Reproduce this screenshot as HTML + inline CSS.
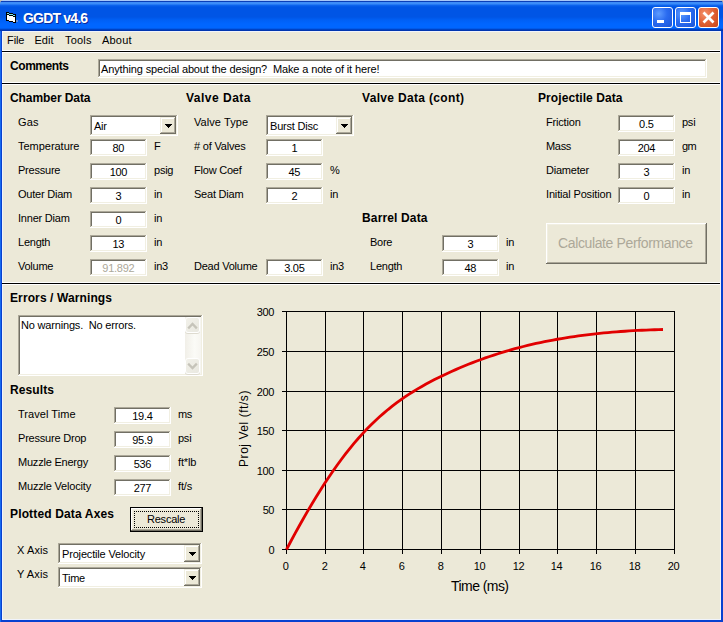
<!DOCTYPE html>
<html><head><meta charset="utf-8"><title>GGDT v4.6</title>
<style>
html,body{margin:0;padding:0;width:723px;height:622px;overflow:hidden;background:#C9C3B4}
body>div,body>svg{position:absolute}
div{position:absolute;box-sizing:content-box;font-family:"Liberation Sans",sans-serif;white-space:pre}
</style></head><body>
<div style="left:0;top:0;width:723px;height:31px;border-radius:4px 4px 0 0;background:linear-gradient(to bottom,#A8C8F8 0px,#A8C8F8 1px,#0A3EB8 1px,#0A3EB8 2px,#3D8DF8 2px,#3D8DF8 4px,#1068F0 5px,#0055E5 7px,#0055E5 17px,#0060F5 20px,#0066FF 24px,#0066FF 28px,#0050D8 29px,#0035B0 30px,#0035B0 31px)"></div>
<div style="left:0px;top:31px;width:723px;height:591px;background:#0841D0;"></div>
<div style="left:0px;top:31px;width:1px;height:591px;background:#166AEE;"></div>
<div style="left:2px;top:31px;width:719px;height:589px;background:#F0F4FC;"></div>
<div style="left:3px;top:32px;width:717px;height:587px;background:#ECE9D8;"></div>
<svg style="position:absolute;left:0;top:0" width="20" height="26" shape-rendering="crispEdges"><rect x="7" y="12" width="2" height="1" fill="#000"/><rect x="7" y="13" width="2" height="1" fill="#7FE3E8"/><rect x="7" y="14" width="2" height="1" fill="#000"/><rect x="7" y="15" width="2" height="5" fill="#FFF"/><rect x="7" y="20" width="2" height="1" fill="#000"/><rect x="9" y="13" width="4" height="1" fill="#000"/><rect x="9" y="14" width="4" height="1" fill="#7FE3E8"/><rect x="9" y="15" width="4" height="1" fill="#000"/><rect x="9" y="16" width="4" height="5" fill="#FFF"/><rect x="9" y="21" width="4" height="1" fill="#000"/><rect x="13" y="14" width="2" height="1" fill="#000"/><rect x="13" y="15" width="2" height="1" fill="#7FE3E8"/><rect x="13" y="16" width="2" height="1" fill="#000"/><rect x="13" y="17" width="2" height="5" fill="#FFF"/><rect x="13" y="22" width="2" height="1" fill="#000"/><rect x="6" y="12" width="1" height="9" fill="#000"/><rect x="15" y="14" width="1" height="9" fill="#000"/><rect x="16" y="20" width="2" height="2" fill="#8CA0C8" opacity="0.7"/></svg>
<div style="left:652px;top:7px;width:19px;height:19px;border:1px solid #fff;border-radius:3px;background:radial-gradient(circle at 30% 30%,#5E9CFF 0%,#2A6BF0 45%,#1A55D8 100%)"></div>
<div style="left:675px;top:7px;width:19px;height:19px;border:1px solid #fff;border-radius:3px;background:radial-gradient(circle at 30% 30%,#5E9CFF 0%,#2A6BF0 45%,#1A55D8 100%)"></div>
<div style="left:698px;top:7px;width:19px;height:19px;border:1px solid #fff;border-radius:3px;background:radial-gradient(circle at 30% 30%,#F5926C 0%,#E26338 45%,#C84517 100%)"></div>
<div style="left:657px;top:20px;width:7px;height:3px;background:#fff;"></div>
<div style="left:680px;top:12px;width:9px;height:7px;border:1px solid #fff;border-top-width:3px"></div>
<svg style="position:absolute;left:698px;top:7px" width="21" height="21"><path d="M5.5 5.5L15.5 15.5M15.5 5.5L5.5 15.5" stroke="#fff" stroke-width="2.7"/></svg>
<div style="left:2px;top:50px;width:718px;height:1px;background:#FFFFFF;"></div>
<div style="left:2px;top:51px;width:718px;height:1px;background:#000;"></div>
<div style="left:2px;top:52px;width:718px;height:1px;background:#FFFFFF;"></div>
<div style="left:98px;top:59px;width:609px;height:19px;background:#FFFFFF;"></div>
<div style="left:98px;top:59px;width:608px;height:18px;background:#ACA899;"></div>
<div style="left:99px;top:60px;width:607px;height:17px;background:#F1EFE2;"></div>
<div style="left:99px;top:60px;width:606px;height:16px;background:#716F64;"></div>
<div style="left:100px;top:61px;width:605px;height:15px;background:#fff;"></div>
<div style="left:2px;top:82px;width:718px;height:1px;background:#FFFFFF;"></div>
<div style="left:2px;top:83px;width:718px;height:1px;background:#000;"></div>
<div style="left:2px;top:84px;width:718px;height:1px;background:#FFFFFF;"></div>
<div style="left:90px;top:115px;width:88px;height:21px;background:#FFFFFF;"></div>
<div style="left:90px;top:115px;width:87px;height:20px;background:#ACA899;"></div>
<div style="left:91px;top:116px;width:86px;height:19px;background:#F1EFE2;"></div>
<div style="left:91px;top:116px;width:85px;height:18px;background:#716F64;"></div>
<div style="left:92px;top:117px;width:84px;height:17px;background:#fff;"></div>
<div style="left:160px;top:117px;width:16px;height:17px;background:#716F64;"></div>
<div style="left:160px;top:117px;width:15px;height:16px;background:#F1EFE2;"></div>
<div style="left:161px;top:118px;width:14px;height:15px;background:#ACA899;"></div>
<div style="left:161px;top:118px;width:13px;height:14px;background:#FFFFFF;"></div>
<div style="left:162px;top:119px;width:12px;height:13px;background:#ECE9D8;"></div>
<svg style="position:absolute;left:165px;top:124px" width="7" height="4" shape-rendering="crispEdges"><rect x="0" y="0" width="7" height="1"/><rect x="1" y="1" width="5" height="1"/><rect x="2" y="2" width="3" height="1"/><rect x="3" y="3" width="1" height="1"/></svg>
<div style="left:90px;top:139px;width:57px;height:17px;background:#FFFFFF;"></div>
<div style="left:90px;top:139px;width:56px;height:16px;background:#ACA899;"></div>
<div style="left:91px;top:140px;width:55px;height:15px;background:#F1EFE2;"></div>
<div style="left:91px;top:140px;width:54px;height:14px;background:#716F64;"></div>
<div style="left:92px;top:141px;width:53px;height:13px;background:#fff;"></div>
<div style="left:90px;top:163px;width:57px;height:17px;background:#FFFFFF;"></div>
<div style="left:90px;top:163px;width:56px;height:16px;background:#ACA899;"></div>
<div style="left:91px;top:164px;width:55px;height:15px;background:#F1EFE2;"></div>
<div style="left:91px;top:164px;width:54px;height:14px;background:#716F64;"></div>
<div style="left:92px;top:165px;width:53px;height:13px;background:#fff;"></div>
<div style="left:90px;top:187px;width:57px;height:17px;background:#FFFFFF;"></div>
<div style="left:90px;top:187px;width:56px;height:16px;background:#ACA899;"></div>
<div style="left:91px;top:188px;width:55px;height:15px;background:#F1EFE2;"></div>
<div style="left:91px;top:188px;width:54px;height:14px;background:#716F64;"></div>
<div style="left:92px;top:189px;width:53px;height:13px;background:#fff;"></div>
<div style="left:90px;top:211px;width:57px;height:17px;background:#FFFFFF;"></div>
<div style="left:90px;top:211px;width:56px;height:16px;background:#ACA899;"></div>
<div style="left:91px;top:212px;width:55px;height:15px;background:#F1EFE2;"></div>
<div style="left:91px;top:212px;width:54px;height:14px;background:#716F64;"></div>
<div style="left:92px;top:213px;width:53px;height:13px;background:#fff;"></div>
<div style="left:90px;top:235px;width:57px;height:17px;background:#FFFFFF;"></div>
<div style="left:90px;top:235px;width:56px;height:16px;background:#ACA899;"></div>
<div style="left:91px;top:236px;width:55px;height:15px;background:#F1EFE2;"></div>
<div style="left:91px;top:236px;width:54px;height:14px;background:#716F64;"></div>
<div style="left:92px;top:237px;width:53px;height:13px;background:#fff;"></div>
<div style="left:90px;top:259px;width:57px;height:17px;background:#FFFFFF;"></div>
<div style="left:90px;top:259px;width:56px;height:16px;background:#ACA899;"></div>
<div style="left:91px;top:260px;width:55px;height:15px;background:#F1EFE2;"></div>
<div style="left:91px;top:260px;width:54px;height:14px;background:#716F64;"></div>
<div style="left:92px;top:261px;width:53px;height:13px;background:#fff;"></div>
<div style="left:266px;top:115px;width:88px;height:21px;background:#FFFFFF;"></div>
<div style="left:266px;top:115px;width:87px;height:20px;background:#ACA899;"></div>
<div style="left:267px;top:116px;width:86px;height:19px;background:#F1EFE2;"></div>
<div style="left:267px;top:116px;width:85px;height:18px;background:#716F64;"></div>
<div style="left:268px;top:117px;width:84px;height:17px;background:#fff;"></div>
<div style="left:336px;top:117px;width:16px;height:17px;background:#716F64;"></div>
<div style="left:336px;top:117px;width:15px;height:16px;background:#F1EFE2;"></div>
<div style="left:337px;top:118px;width:14px;height:15px;background:#ACA899;"></div>
<div style="left:337px;top:118px;width:13px;height:14px;background:#FFFFFF;"></div>
<div style="left:338px;top:119px;width:12px;height:13px;background:#ECE9D8;"></div>
<svg style="position:absolute;left:341px;top:124px" width="7" height="4" shape-rendering="crispEdges"><rect x="0" y="0" width="7" height="1"/><rect x="1" y="1" width="5" height="1"/><rect x="2" y="2" width="3" height="1"/><rect x="3" y="3" width="1" height="1"/></svg>
<div style="left:266px;top:139px;width:57px;height:17px;background:#FFFFFF;"></div>
<div style="left:266px;top:139px;width:56px;height:16px;background:#ACA899;"></div>
<div style="left:267px;top:140px;width:55px;height:15px;background:#F1EFE2;"></div>
<div style="left:267px;top:140px;width:54px;height:14px;background:#716F64;"></div>
<div style="left:268px;top:141px;width:53px;height:13px;background:#fff;"></div>
<div style="left:266px;top:163px;width:57px;height:17px;background:#FFFFFF;"></div>
<div style="left:266px;top:163px;width:56px;height:16px;background:#ACA899;"></div>
<div style="left:267px;top:164px;width:55px;height:15px;background:#F1EFE2;"></div>
<div style="left:267px;top:164px;width:54px;height:14px;background:#716F64;"></div>
<div style="left:268px;top:165px;width:53px;height:13px;background:#fff;"></div>
<div style="left:266px;top:187px;width:57px;height:17px;background:#FFFFFF;"></div>
<div style="left:266px;top:187px;width:56px;height:16px;background:#ACA899;"></div>
<div style="left:267px;top:188px;width:55px;height:15px;background:#F1EFE2;"></div>
<div style="left:267px;top:188px;width:54px;height:14px;background:#716F64;"></div>
<div style="left:268px;top:189px;width:53px;height:13px;background:#fff;"></div>
<div style="left:266px;top:259px;width:57px;height:17px;background:#FFFFFF;"></div>
<div style="left:266px;top:259px;width:56px;height:16px;background:#ACA899;"></div>
<div style="left:267px;top:260px;width:55px;height:15px;background:#F1EFE2;"></div>
<div style="left:267px;top:260px;width:54px;height:14px;background:#716F64;"></div>
<div style="left:268px;top:261px;width:53px;height:13px;background:#fff;"></div>
<div style="left:442px;top:235px;width:57px;height:17px;background:#FFFFFF;"></div>
<div style="left:442px;top:235px;width:56px;height:16px;background:#ACA899;"></div>
<div style="left:443px;top:236px;width:55px;height:15px;background:#F1EFE2;"></div>
<div style="left:443px;top:236px;width:54px;height:14px;background:#716F64;"></div>
<div style="left:444px;top:237px;width:53px;height:13px;background:#fff;"></div>
<div style="left:442px;top:259px;width:57px;height:17px;background:#FFFFFF;"></div>
<div style="left:442px;top:259px;width:56px;height:16px;background:#ACA899;"></div>
<div style="left:443px;top:260px;width:55px;height:15px;background:#F1EFE2;"></div>
<div style="left:443px;top:260px;width:54px;height:14px;background:#716F64;"></div>
<div style="left:444px;top:261px;width:53px;height:13px;background:#fff;"></div>
<div style="left:618px;top:115px;width:57px;height:17px;background:#FFFFFF;"></div>
<div style="left:618px;top:115px;width:56px;height:16px;background:#ACA899;"></div>
<div style="left:619px;top:116px;width:55px;height:15px;background:#F1EFE2;"></div>
<div style="left:619px;top:116px;width:54px;height:14px;background:#716F64;"></div>
<div style="left:620px;top:117px;width:53px;height:13px;background:#fff;"></div>
<div style="left:618px;top:139px;width:57px;height:17px;background:#FFFFFF;"></div>
<div style="left:618px;top:139px;width:56px;height:16px;background:#ACA899;"></div>
<div style="left:619px;top:140px;width:55px;height:15px;background:#F1EFE2;"></div>
<div style="left:619px;top:140px;width:54px;height:14px;background:#716F64;"></div>
<div style="left:620px;top:141px;width:53px;height:13px;background:#fff;"></div>
<div style="left:618px;top:163px;width:57px;height:17px;background:#FFFFFF;"></div>
<div style="left:618px;top:163px;width:56px;height:16px;background:#ACA899;"></div>
<div style="left:619px;top:164px;width:55px;height:15px;background:#F1EFE2;"></div>
<div style="left:619px;top:164px;width:54px;height:14px;background:#716F64;"></div>
<div style="left:620px;top:165px;width:53px;height:13px;background:#fff;"></div>
<div style="left:618px;top:187px;width:57px;height:17px;background:#FFFFFF;"></div>
<div style="left:618px;top:187px;width:56px;height:16px;background:#ACA899;"></div>
<div style="left:619px;top:188px;width:55px;height:15px;background:#F1EFE2;"></div>
<div style="left:619px;top:188px;width:54px;height:14px;background:#716F64;"></div>
<div style="left:620px;top:189px;width:53px;height:13px;background:#fff;"></div>
<div style="left:546px;top:223px;width:161px;height:41px;background:#716F64"></div>
<div style="left:546px;top:223px;width:160px;height:40px;background:#FFFFFF"></div>
<div style="left:547px;top:224px;width:159px;height:39px;background:#ACA899"></div>
<div style="left:547px;top:224px;width:158px;height:38px;background:#F1EFE2"></div>
<div style="left:548px;top:225px;width:157px;height:37px;background:#ECE9D8"></div>
<div style="left:2px;top:282px;width:718px;height:1px;background:#FFFFFF;"></div>
<div style="left:2px;top:283px;width:718px;height:1px;background:#000;"></div>
<div style="left:2px;top:284px;width:718px;height:1px;background:#FFFFFF;"></div>
<div style="left:18px;top:315px;width:185px;height:61px;background:#FFFFFF;"></div>
<div style="left:18px;top:315px;width:184px;height:60px;background:#ACA899;"></div>
<div style="left:19px;top:316px;width:183px;height:59px;background:#F1EFE2;"></div>
<div style="left:19px;top:316px;width:182px;height:58px;background:#716F64;"></div>
<div style="left:20px;top:317px;width:181px;height:57px;background:#fff;"></div>
<div style="left:185px;top:317px;width:16px;height:57px;background:linear-gradient(to right,#F1EFE8,#FBFBF7 60%,#F6F5F0)"></div>
<div style="left:185px;top:317px;width:13px;height:14px;border:1px solid #FFFFFF;border-radius:3px;background:linear-gradient(to bottom right,#F2F1EA,#E9E8E0);box-shadow:0 1px 0 #DEDBD0"></div>
<svg style="position:absolute;left:185px;top:317px" width="15" height="16"><path d="M4 10.5L7.5 7L11 10.5" stroke="#C6C4BA" stroke-width="2.3" fill="none" stroke-linecap="square" stroke-linejoin="miter"/></svg>
<div style="left:185px;top:358px;width:13px;height:14px;border:1px solid #FFFFFF;border-radius:3px;background:linear-gradient(to bottom right,#F2F1EA,#E9E8E0);box-shadow:0 1px 0 #DEDBD0"></div>
<svg style="position:absolute;left:185px;top:358px" width="15" height="16"><path d="M4 6.5L7.5 10L11 6.5" stroke="#C6C4BA" stroke-width="2.3" fill="none" stroke-linecap="square" stroke-linejoin="miter"/></svg>
<div style="left:114px;top:407px;width:57px;height:17px;background:#FFFFFF;"></div>
<div style="left:114px;top:407px;width:56px;height:16px;background:#ACA899;"></div>
<div style="left:115px;top:408px;width:55px;height:15px;background:#F1EFE2;"></div>
<div style="left:115px;top:408px;width:54px;height:14px;background:#716F64;"></div>
<div style="left:116px;top:409px;width:53px;height:13px;background:#fff;"></div>
<div style="left:114px;top:431px;width:57px;height:17px;background:#FFFFFF;"></div>
<div style="left:114px;top:431px;width:56px;height:16px;background:#ACA899;"></div>
<div style="left:115px;top:432px;width:55px;height:15px;background:#F1EFE2;"></div>
<div style="left:115px;top:432px;width:54px;height:14px;background:#716F64;"></div>
<div style="left:116px;top:433px;width:53px;height:13px;background:#fff;"></div>
<div style="left:114px;top:455px;width:57px;height:17px;background:#FFFFFF;"></div>
<div style="left:114px;top:455px;width:56px;height:16px;background:#ACA899;"></div>
<div style="left:115px;top:456px;width:55px;height:15px;background:#F1EFE2;"></div>
<div style="left:115px;top:456px;width:54px;height:14px;background:#716F64;"></div>
<div style="left:116px;top:457px;width:53px;height:13px;background:#fff;"></div>
<div style="left:114px;top:479px;width:57px;height:17px;background:#FFFFFF;"></div>
<div style="left:114px;top:479px;width:56px;height:16px;background:#ACA899;"></div>
<div style="left:115px;top:480px;width:55px;height:15px;background:#F1EFE2;"></div>
<div style="left:115px;top:480px;width:54px;height:14px;background:#716F64;"></div>
<div style="left:116px;top:481px;width:53px;height:13px;background:#fff;"></div>
<div style="left:130px;top:507px;width:73px;height:25px;background:#000;"></div>
<div style="left:131px;top:508px;width:71px;height:23px;background:#716F64;"></div>
<div style="left:131px;top:508px;width:70px;height:22px;background:#FFFFFF;"></div>
<div style="left:132px;top:509px;width:69px;height:21px;background:#ACA899;"></div>
<div style="left:132px;top:509px;width:68px;height:20px;background:#F1EFE2;"></div>
<div style="left:133px;top:510px;width:67px;height:19px;background:#ECE9D8;"></div>
<div style="left:134px;top:511px;width:63px;height:15px;border:1px dotted #000"></div>
<div style="left:58px;top:543px;width:144px;height:21px;background:#FFFFFF;"></div>
<div style="left:58px;top:543px;width:143px;height:20px;background:#ACA899;"></div>
<div style="left:59px;top:544px;width:142px;height:19px;background:#F1EFE2;"></div>
<div style="left:59px;top:544px;width:141px;height:18px;background:#716F64;"></div>
<div style="left:60px;top:545px;width:140px;height:17px;background:#fff;"></div>
<div style="left:184px;top:545px;width:16px;height:17px;background:#716F64;"></div>
<div style="left:184px;top:545px;width:15px;height:16px;background:#F1EFE2;"></div>
<div style="left:185px;top:546px;width:14px;height:15px;background:#ACA899;"></div>
<div style="left:185px;top:546px;width:13px;height:14px;background:#FFFFFF;"></div>
<div style="left:186px;top:547px;width:12px;height:13px;background:#ECE9D8;"></div>
<svg style="position:absolute;left:189px;top:552px" width="7" height="4" shape-rendering="crispEdges"><rect x="0" y="0" width="7" height="1"/><rect x="1" y="1" width="5" height="1"/><rect x="2" y="2" width="3" height="1"/><rect x="3" y="3" width="1" height="1"/></svg>
<div style="left:58px;top:567px;width:144px;height:21px;background:#FFFFFF;"></div>
<div style="left:58px;top:567px;width:143px;height:20px;background:#ACA899;"></div>
<div style="left:59px;top:568px;width:142px;height:19px;background:#F1EFE2;"></div>
<div style="left:59px;top:568px;width:141px;height:18px;background:#716F64;"></div>
<div style="left:60px;top:569px;width:140px;height:17px;background:#fff;"></div>
<div style="left:184px;top:569px;width:16px;height:17px;background:#716F64;"></div>
<div style="left:184px;top:569px;width:15px;height:16px;background:#F1EFE2;"></div>
<div style="left:185px;top:570px;width:14px;height:15px;background:#ACA899;"></div>
<div style="left:185px;top:570px;width:13px;height:14px;background:#FFFFFF;"></div>
<div style="left:186px;top:571px;width:12px;height:13px;background:#ECE9D8;"></div>
<svg style="position:absolute;left:189px;top:576px" width="7" height="4" shape-rendering="crispEdges"><rect x="0" y="0" width="7" height="1"/><rect x="1" y="1" width="5" height="1"/><rect x="2" y="2" width="3" height="1"/><rect x="3" y="3" width="1" height="1"/></svg>
<svg style="position:absolute;left:0;top:0" width="723" height="622" shape-rendering="crispEdges"><rect x="286" y="311" width="1" height="243" fill="#000"/><rect x="325" y="311" width="1" height="243" fill="#000"/><rect x="363" y="311" width="1" height="243" fill="#000"/><rect x="402" y="311" width="1" height="243" fill="#000"/><rect x="441" y="311" width="1" height="243" fill="#000"/><rect x="480" y="311" width="1" height="243" fill="#000"/><rect x="519" y="311" width="1" height="243" fill="#000"/><rect x="557" y="311" width="1" height="243" fill="#000"/><rect x="596" y="311" width="1" height="243" fill="#000"/><rect x="635" y="311" width="1" height="243" fill="#000"/><rect x="674" y="311" width="1" height="243" fill="#000"/><rect x="282" y="549" width="393" height="1" fill="#000"/><rect x="282" y="509" width="393" height="1" fill="#000"/><rect x="282" y="470" width="393" height="1" fill="#000"/><rect x="282" y="430" width="393" height="1" fill="#000"/><rect x="282" y="391" width="393" height="1" fill="#000"/><rect x="282" y="351" width="393" height="1" fill="#000"/><rect x="282" y="311" width="393" height="1" fill="#000"/></svg>
<div style="left:169px;top:421px;width:150px;height:15px;transform:rotate(-90deg);text-align:center;font:12px/15px 'Liberation Sans',sans-serif;letter-spacing:0.55px;white-space:pre">Proj Vel (ft/s)</div>
<svg style="position:absolute;left:0;top:0" width="723" height="622"><path d="M286.50 549.48 L290.73 541.51 L294.96 533.68 L299.19 526.01 L303.42 518.50 L307.65 511.16 L311.88 503.99 L316.11 497.01 L320.34 490.21 L324.57 483.61 L328.80 477.22 L333.03 471.03 L337.26 465.05 L341.49 459.28 L345.72 453.71 L349.96 448.36 L354.19 443.22 L358.42 438.29 L362.65 433.58 L366.88 429.08 L371.11 424.79 L375.34 420.70 L379.57 416.80 L383.80 413.09 L388.03 409.54 L392.26 406.16 L396.49 402.94 L400.72 399.87 L404.95 396.94 L409.18 394.14 L413.41 391.46 L417.64 388.90 L421.87 386.44 L426.10 384.08 L430.33 381.81 L434.56 379.61 L438.79 377.49 L443.02 375.44 L447.25 373.44 L451.48 371.50 L455.71 369.61 L459.94 367.79 L464.17 366.01 L468.40 364.29 L472.63 362.63 L476.87 361.01 L481.10 359.45 L485.33 357.94 L489.56 356.48 L493.79 355.07 L498.02 353.71 L502.25 352.39 L506.48 351.12 L510.71 349.90 L514.94 348.72 L519.17 347.59 L523.40 346.50 L527.63 345.45 L531.86 344.45 L536.09 343.48 L540.32 342.56 L544.55 341.68 L548.78 340.83 L553.01 340.02 L557.24 339.25 L561.47 338.51 L565.70 337.81 L569.93 337.14 L574.16 336.51 L578.39 335.91 L582.62 335.34 L586.85 334.80 L591.08 334.30 L595.31 333.82 L599.54 333.37 L603.78 332.95 L608.01 332.55 L612.24 332.19 L616.47 331.84 L620.70 331.52 L624.93 331.23 L629.16 330.95 L633.39 330.70 L637.62 330.47 L641.85 330.26 L646.08 330.07 L650.31 329.90 L654.54 329.75 L658.77 329.61 L663.00 329.49" stroke="#E10000" stroke-width="2.8" fill="none" stroke-linecap="butt"/></svg>
<div style="left:23.00px;top:10px;font-size:14px;line-height:16px;font-weight:700;color:#fff;letter-spacing:-0.824px;text-shadow:1px 1px 0 #0A2A9C;">GGDT v4.6</div>
<div style="left:7.00px;top:34px;font-size:11px;line-height:13px;font-weight:400;color:#000;letter-spacing:-0.078px;">File</div>
<div style="left:34.50px;top:34px;font-size:11px;line-height:13px;font-weight:400;color:#000;letter-spacing:0.010px;">Edit</div>
<div style="left:65.00px;top:34px;font-size:11px;line-height:13px;font-weight:400;color:#000;letter-spacing:0.203px;">Tools</div>
<div style="left:102.00px;top:34px;font-size:11px;line-height:13px;font-weight:400;color:#000;letter-spacing:0.188px;">About</div>
<div style="left:10.00px;top:59px;font-size:12px;line-height:14px;font-weight:700;color:#000;letter-spacing:-0.431px;">Comments</div>
<div style="left:101.00px;top:63px;font-size:11px;line-height:13px;font-weight:400;color:#000;letter-spacing:-0.133px;">Anything special about the design?  Make a note of it here!</div>
<div style="left:10.00px;top:91px;font-size:12px;line-height:14px;font-weight:700;color:#000;letter-spacing:-0.078px;">Chamber Data</div>
<div style="left:186.00px;top:91px;font-size:12px;line-height:14px;font-weight:700;color:#000;letter-spacing:0.495px;">Valve Data</div>
<div style="left:362.00px;top:91px;font-size:12px;line-height:14px;font-weight:700;color:#000;letter-spacing:0.331px;">Valve Data (cont)</div>
<div style="left:538.00px;top:91px;font-size:12px;line-height:14px;font-weight:700;color:#000;letter-spacing:0.080px;">Projectile Data</div>
<div style="left:18.00px;top:116px;font-size:11px;line-height:13px;font-weight:400;color:#000;letter-spacing:0.156px;">Gas</div>
<div style="left:94.00px;top:120px;font-size:11px;line-height:13px;font-weight:400;color:#000;letter-spacing:-0.235px;">Air</div>
<div style="left:18.00px;top:140px;font-size:11px;line-height:13px;font-weight:400;color:#000;letter-spacing:-0.027px;">Temperature</div>
<div style="left:112.59px;top:142px;font-size:11px;line-height:13px;font-weight:400;color:#000;letter-spacing:-0.429px;">80</div>
<div style="left:154.00px;top:140px;font-size:11px;line-height:13px;font-weight:400;color:#000;letter-spacing:0.000px;">F</div>
<div style="left:18.00px;top:164px;font-size:11px;line-height:13px;font-weight:400;color:#000;letter-spacing:-0.220px;">Pressure</div>
<div style="left:109.64px;top:166px;font-size:11px;line-height:13px;font-weight:400;color:#000;letter-spacing:-0.321px;">100</div>
<div style="left:154.00px;top:164px;font-size:11px;line-height:13px;font-weight:400;color:#000;letter-spacing:-0.236px;">psig</div>
<div style="left:18.00px;top:188px;font-size:11px;line-height:13px;font-weight:400;color:#000;letter-spacing:-0.219px;">Outer Diam</div>
<div style="left:115.44px;top:190px;font-size:11px;line-height:13px;font-weight:400;color:#000;letter-spacing:0.000px;">3</div>
<div style="left:154.00px;top:188px;font-size:11px;line-height:13px;font-weight:400;color:#000;letter-spacing:-0.300px;">in</div>
<div style="left:18.00px;top:212px;font-size:11px;line-height:13px;font-weight:400;color:#000;letter-spacing:-0.209px;">Inner Diam</div>
<div style="left:115.44px;top:214px;font-size:11px;line-height:13px;font-weight:400;color:#000;letter-spacing:0.000px;">0</div>
<div style="left:154.00px;top:212px;font-size:11px;line-height:13px;font-weight:400;color:#000;letter-spacing:-0.300px;">in</div>
<div style="left:18.00px;top:236px;font-size:11px;line-height:13px;font-weight:400;color:#000;letter-spacing:-0.236px;">Length</div>
<div style="left:112.59px;top:238px;font-size:11px;line-height:13px;font-weight:400;color:#000;letter-spacing:-0.429px;">13</div>
<div style="left:154.00px;top:236px;font-size:11px;line-height:13px;font-weight:400;color:#000;letter-spacing:-0.300px;">in</div>
<div style="left:18.00px;top:260px;font-size:11px;line-height:13px;font-weight:400;color:#000;letter-spacing:-0.257px;">Volume</div>
<div style="left:102.26px;top:262px;font-size:11px;line-height:13px;font-weight:400;color:#ACA899;letter-spacing:-0.236px;">91.892</div>
<div style="left:154.00px;top:260px;font-size:11px;line-height:13px;font-weight:400;color:#000;letter-spacing:-0.257px;">in3</div>
<div style="left:194.00px;top:116px;font-size:11px;line-height:13px;font-weight:400;color:#000;letter-spacing:0.066px;">Valve Type</div>
<div style="left:270.00px;top:120px;font-size:11px;line-height:13px;font-weight:400;color:#000;letter-spacing:-0.195px;">Burst Disc</div>
<div style="left:194.00px;top:140px;font-size:11px;line-height:13px;font-weight:400;color:#000;letter-spacing:-0.188px;"># of Valves</div>
<div style="left:291.44px;top:142px;font-size:11px;line-height:13px;font-weight:400;color:#000;letter-spacing:0.000px;">1</div>
<div style="left:194.00px;top:164px;font-size:11px;line-height:13px;font-weight:400;color:#000;letter-spacing:-0.217px;">Flow Coef</div>
<div style="left:288.59px;top:166px;font-size:11px;line-height:13px;font-weight:400;color:#000;letter-spacing:-0.429px;">45</div>
<div style="left:330.00px;top:164px;font-size:11px;line-height:13px;font-weight:400;color:#000;letter-spacing:0.000px;">%</div>
<div style="left:194.00px;top:188px;font-size:11px;line-height:13px;font-weight:400;color:#000;letter-spacing:-0.225px;">Seat Diam</div>
<div style="left:291.44px;top:190px;font-size:11px;line-height:13px;font-weight:400;color:#000;letter-spacing:0.000px;">2</div>
<div style="left:330.00px;top:188px;font-size:11px;line-height:13px;font-weight:400;color:#000;letter-spacing:-0.300px;">in</div>
<div style="left:194.00px;top:260px;font-size:11px;line-height:13px;font-weight:400;color:#000;letter-spacing:-0.231px;">Dead Volume</div>
<div style="left:284.16px;top:262px;font-size:11px;line-height:13px;font-weight:400;color:#000;letter-spacing:-0.250px;">3.05</div>
<div style="left:330.00px;top:260px;font-size:11px;line-height:13px;font-weight:400;color:#000;letter-spacing:-0.257px;">in3</div>
<div style="left:362.00px;top:211px;font-size:12px;line-height:14px;font-weight:700;color:#000;letter-spacing:0.147px;">Barrel Data</div>
<div style="left:370.00px;top:236px;font-size:11px;line-height:13px;font-weight:400;color:#000;letter-spacing:-0.271px;">Bore</div>
<div style="left:467.44px;top:238px;font-size:11px;line-height:13px;font-weight:400;color:#000;letter-spacing:0.000px;">3</div>
<div style="left:506.00px;top:236px;font-size:11px;line-height:13px;font-weight:400;color:#000;letter-spacing:-0.300px;">in</div>
<div style="left:370.00px;top:260px;font-size:11px;line-height:13px;font-weight:400;color:#000;letter-spacing:-0.236px;">Length</div>
<div style="left:464.59px;top:262px;font-size:11px;line-height:13px;font-weight:400;color:#000;letter-spacing:-0.429px;">48</div>
<div style="left:506.00px;top:260px;font-size:11px;line-height:13px;font-weight:400;color:#000;letter-spacing:-0.300px;">in</div>
<div style="left:546.00px;top:116px;font-size:11px;line-height:13px;font-weight:400;color:#000;letter-spacing:-0.180px;">Friction</div>
<div style="left:639.12px;top:118px;font-size:11px;line-height:13px;font-weight:400;color:#000;letter-spacing:-0.268px;">0.5</div>
<div style="left:682.00px;top:116px;font-size:11px;line-height:13px;font-weight:400;color:#000;letter-spacing:-0.246px;">psi</div>
<div style="left:546.00px;top:140px;font-size:11px;line-height:13px;font-weight:400;color:#000;letter-spacing:-0.307px;">Mass</div>
<div style="left:637.64px;top:142px;font-size:11px;line-height:13px;font-weight:400;color:#000;letter-spacing:-0.321px;">204</div>
<div style="left:682.00px;top:140px;font-size:11px;line-height:13px;font-weight:400;color:#000;letter-spacing:-0.535px;">gm</div>
<div style="left:546.00px;top:164px;font-size:11px;line-height:13px;font-weight:400;color:#000;letter-spacing:-0.223px;">Diameter</div>
<div style="left:643.44px;top:166px;font-size:11px;line-height:13px;font-weight:400;color:#000;letter-spacing:0.000px;">3</div>
<div style="left:682.00px;top:164px;font-size:11px;line-height:13px;font-weight:400;color:#000;letter-spacing:-0.300px;">in</div>
<div style="left:546.00px;top:188px;font-size:11px;line-height:13px;font-weight:400;color:#000;letter-spacing:-0.158px;">Initial Position</div>
<div style="left:643.44px;top:190px;font-size:11px;line-height:13px;font-weight:400;color:#000;letter-spacing:0.000px;">0</div>
<div style="left:682.00px;top:188px;font-size:11px;line-height:13px;font-weight:400;color:#000;letter-spacing:-0.300px;">in</div>
<div style="left:558.00px;top:235px;font-size:14px;line-height:16px;font-weight:400;color:#ACA899;letter-spacing:-0.370px;">Calculate Performance</div>
<div style="left:10.00px;top:291px;font-size:12px;line-height:14px;font-weight:700;color:#000;letter-spacing:0.109px;">Errors / Warnings</div>
<div style="left:21.00px;top:319px;font-size:11px;line-height:13px;font-weight:400;color:#000;letter-spacing:-0.181px;">No warnings.  No errors.</div>
<div style="left:10.00px;top:383px;font-size:12px;line-height:14px;font-weight:700;color:#000;letter-spacing:0.107px;">Results</div>
<div style="left:18.00px;top:408px;font-size:11px;line-height:13px;font-weight:400;color:#000;letter-spacing:0.045px;">Travel Time</div>
<div style="left:132.16px;top:410px;font-size:11px;line-height:13px;font-weight:400;color:#000;letter-spacing:-0.250px;">19.4</div>
<div style="left:178.00px;top:408px;font-size:11px;line-height:13px;font-weight:400;color:#000;letter-spacing:-0.514px;">ms</div>
<div style="left:18.00px;top:432px;font-size:11px;line-height:13px;font-weight:400;color:#000;letter-spacing:-0.207px;">Pressure Drop</div>
<div style="left:132.16px;top:434px;font-size:11px;line-height:13px;font-weight:400;color:#000;letter-spacing:-0.250px;">95.9</div>
<div style="left:178.00px;top:432px;font-size:11px;line-height:13px;font-weight:400;color:#000;letter-spacing:-0.246px;">psi</div>
<div style="left:18.00px;top:456px;font-size:11px;line-height:13px;font-weight:400;color:#000;letter-spacing:-0.212px;">Muzzle Energy</div>
<div style="left:133.64px;top:458px;font-size:11px;line-height:13px;font-weight:400;color:#000;letter-spacing:-0.321px;">536</div>
<div style="left:178.00px;top:456px;font-size:11px;line-height:13px;font-weight:400;color:#000;letter-spacing:-0.166px;">ft*lb</div>
<div style="left:18.00px;top:480px;font-size:11px;line-height:13px;font-weight:400;color:#000;letter-spacing:-0.190px;">Muzzle Velocity</div>
<div style="left:133.64px;top:482px;font-size:11px;line-height:13px;font-weight:400;color:#000;letter-spacing:-0.321px;">277</div>
<div style="left:178.00px;top:480px;font-size:11px;line-height:13px;font-weight:400;color:#000;letter-spacing:-0.171px;">ft/s</div>
<div style="left:10.00px;top:507px;font-size:12px;line-height:14px;font-weight:700;color:#000;letter-spacing:0.150px;">Plotted Data Axes</div>
<div style="left:147.00px;top:513px;font-size:11px;line-height:13px;font-weight:400;color:#000;letter-spacing:-0.225px;">Rescale</div>
<div style="left:17.00px;top:544px;font-size:11px;line-height:13px;font-weight:400;color:#000;letter-spacing:0.084px;">X Axis</div>
<div style="left:62.00px;top:548px;font-size:11px;line-height:13px;font-weight:400;color:#000;letter-spacing:-0.168px;">Projectile Velocity</div>
<div style="left:17.00px;top:568px;font-size:11px;line-height:13px;font-weight:400;color:#000;letter-spacing:0.125px;">Y Axis</div>
<div style="left:62.00px;top:572px;font-size:11px;line-height:13px;font-weight:400;color:#000;letter-spacing:-0.281px;">Time</div>
<div style="left:282.64px;top:560px;font-size:11px;line-height:13px;font-weight:400;color:#000;letter-spacing:0.000px;">0</div>
<div style="left:321.64px;top:560px;font-size:11px;line-height:13px;font-weight:400;color:#000;letter-spacing:0.000px;">2</div>
<div style="left:359.64px;top:560px;font-size:11px;line-height:13px;font-weight:400;color:#000;letter-spacing:0.000px;">4</div>
<div style="left:398.64px;top:560px;font-size:11px;line-height:13px;font-weight:400;color:#000;letter-spacing:0.000px;">6</div>
<div style="left:437.64px;top:560px;font-size:11px;line-height:13px;font-weight:400;color:#000;letter-spacing:0.000px;">8</div>
<div style="left:473.79px;top:560px;font-size:11px;line-height:13px;font-weight:400;color:#000;letter-spacing:-0.429px;">10</div>
<div style="left:512.79px;top:560px;font-size:11px;line-height:13px;font-weight:400;color:#000;letter-spacing:-0.429px;">12</div>
<div style="left:550.79px;top:560px;font-size:11px;line-height:13px;font-weight:400;color:#000;letter-spacing:-0.429px;">14</div>
<div style="left:589.79px;top:560px;font-size:11px;line-height:13px;font-weight:400;color:#000;letter-spacing:-0.429px;">16</div>
<div style="left:628.79px;top:560px;font-size:11px;line-height:13px;font-weight:400;color:#000;letter-spacing:-0.429px;">18</div>
<div style="left:667.79px;top:560px;font-size:11px;line-height:13px;font-weight:400;color:#000;letter-spacing:-0.429px;">20</div>
<div style="left:268.38px;top:544px;font-size:11px;line-height:13px;font-weight:400;color:#000;letter-spacing:0.000px;">0</div>
<div style="left:262.68px;top:504px;font-size:11px;line-height:13px;font-weight:400;color:#000;letter-spacing:-0.429px;">50</div>
<div style="left:256.78px;top:465px;font-size:11px;line-height:13px;font-weight:400;color:#000;letter-spacing:-0.321px;">100</div>
<div style="left:256.78px;top:425px;font-size:11px;line-height:13px;font-weight:400;color:#000;letter-spacing:-0.321px;">150</div>
<div style="left:256.78px;top:386px;font-size:11px;line-height:13px;font-weight:400;color:#000;letter-spacing:-0.321px;">200</div>
<div style="left:256.78px;top:346px;font-size:11px;line-height:13px;font-weight:400;color:#000;letter-spacing:-0.321px;">250</div>
<div style="left:256.78px;top:306px;font-size:11px;line-height:13px;font-weight:400;color:#000;letter-spacing:-0.321px;">300</div>
<div style="left:451.00px;top:578px;font-size:14px;line-height:16px;font-weight:400;color:#000;letter-spacing:-0.559px;">Time (ms)</div>
</body></html>
